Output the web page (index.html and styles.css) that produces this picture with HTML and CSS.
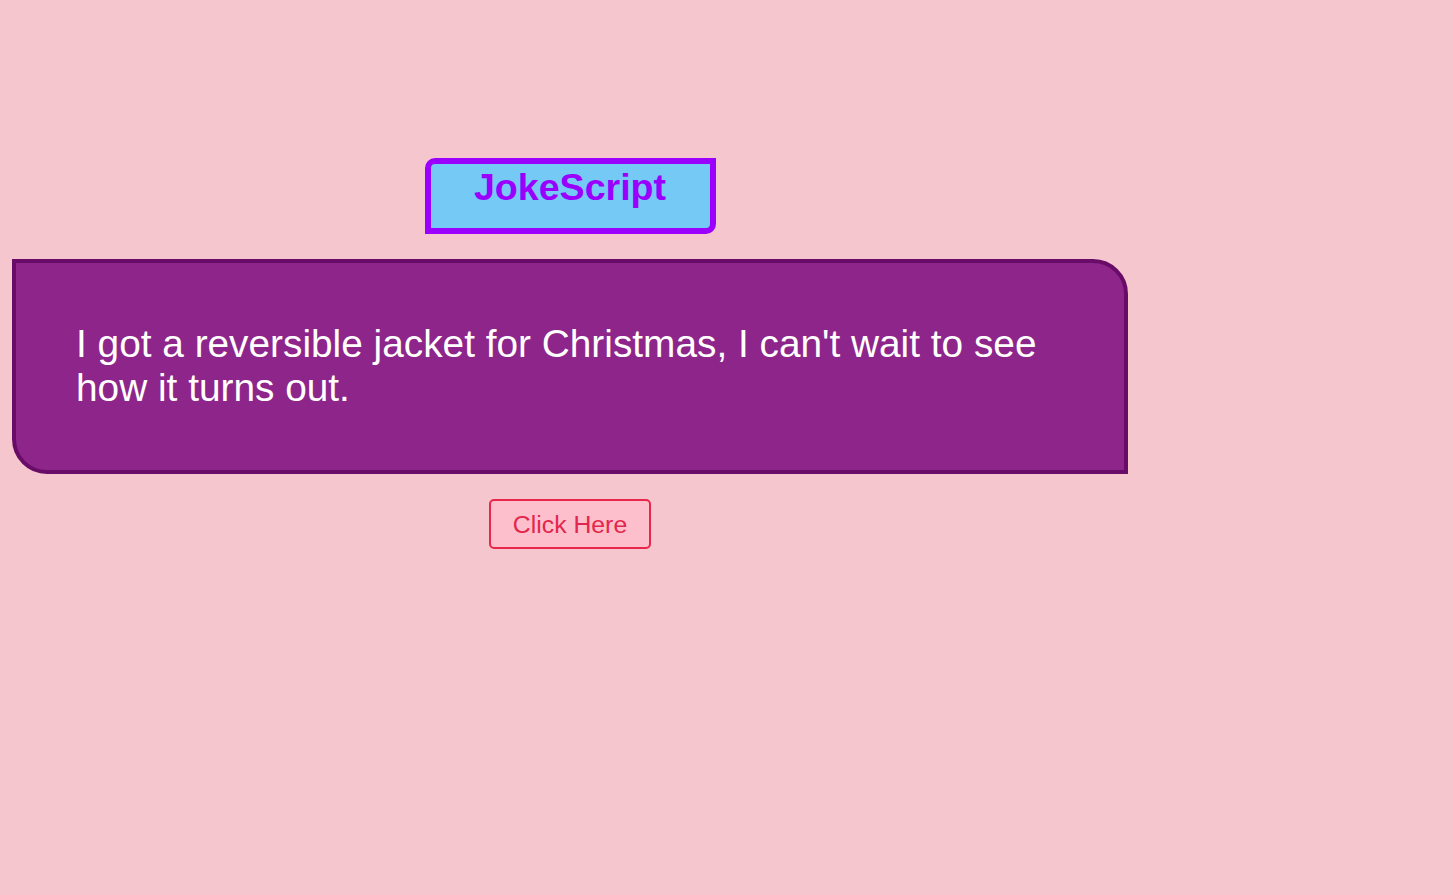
FILE: index.html
```html
<!DOCTYPE html>
<html>
<head>
<meta charset="utf-8">
<link rel="stylesheet" href="styles.css">
</head>
<body>
<main class="app">
  <h1 class="title">JokeScript</h1>
  <div class="card">
    <p class="joke">I got a reversible jacket for Christmas, I can't wait to see how it turns out.</p>
  </div>
  <button class="btn">Click Here</button>
</main>
</body>
</html>
```
FILE: styles.css
```css
html, body {
  margin: 0;
  padding: 0;
  background: #f5c6cd;
  font-family: "Liberation Sans", Arial, sans-serif;
}
.app {
  width: 1116px;
  margin-left: 12px;
  padding-top: 158px;
  display: flex;
  flex-direction: column;
  align-items: center;
  gap: 25px;
}
.title {
  margin: 0;
  box-sizing: border-box;
  width: 291px;
  height: 76px;
  padding: 2px 0 0;
  text-align: center;
  background: #74caf5;
  border: 6px solid #9b00ff;
  border-radius: 10px 0 10px 0;
  color: #9b00ff;
  font-size: 37.6px;
  font-weight: bold;
  line-height: 42px;
}
.card {
  box-sizing: border-box;
  width: 1116px;
  padding: 59px 60px 60px;
  background: #8d258a;
  border: 4px solid #690c68;
  border-radius: 0 35px 0 35px;
}
.joke {
  margin: 0;
  color: #ffffff;
  font-size: 38.8px;
  line-height: 44px;
}
.btn {
  box-sizing: border-box;
  width: 162px;
  height: 50px;
  padding: 2px 0 0;
  background: #fdbfcb;
  border: 2px solid #e9264b;
  border-radius: 5px;
  color: #e3264b;
  font-family: "Liberation Sans", Arial, sans-serif;
  font-size: 24.8px;
}
```
